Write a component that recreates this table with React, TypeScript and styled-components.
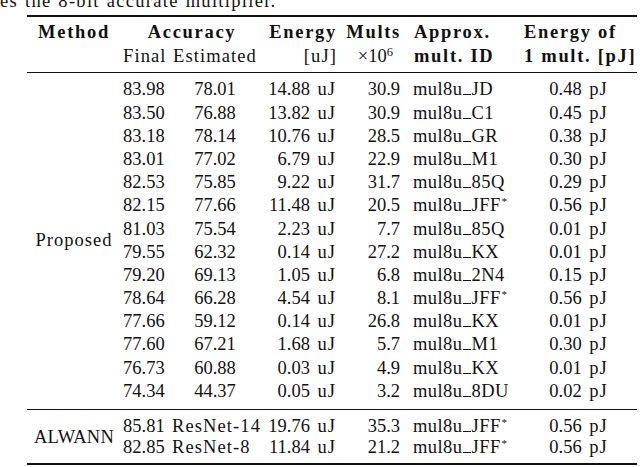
import React from 'react';
import styled, { createGlobalStyle } from 'styled-components';

const GlobalStyle = createGlobalStyle`
  html, body {
    margin: 0;
    padding: 0;
    background: #ffffff;
  }
  body {
    width: 640px;
    height: 467px;
    overflow: hidden;
    font-family: 'Liberation Serif', 'Times New Roman', serif;
    font-size: 18.5px;
    color: #111111;
  }
`;

const COLUMNS = '94px 48px 92px 76px 64px 119px 117px';

const Caption = styled.div`
  margin-top: -10px;
  height: 22px;
  line-height: 22px;
  letter-spacing: 1.3px;
  word-spacing: 1px;
  white-space: nowrap;
`;

const Table = styled.div`
  margin: 3px 0 0 27px;
  width: 610px;
  border-top: 2px solid #111;
  border-bottom: 2px solid #111;
`;

const Section = styled.div<{ $row: number; $gap?: number; $pt: number; $pb: number; $rule?: boolean }>`
  display: grid;
  grid-template-columns: ${COLUMNS};
  grid-auto-rows: ${p => p.$row}px;
  row-gap: ${p => p.$gap ?? 0}px;
  padding: ${p => p.$pt}px 0 ${p => p.$pb}px;
  border-bottom: ${p => (p.$rule ? '1px solid #111' : 'none')};
`;

type Align = 'left' | 'center' | 'right';

const Cell = styled.div<{ $align?: Align; $pl?: number; $pr?: number; $span?: number; $text?: boolean }>`
  text-align: ${p => p.$align ?? 'left'};
  padding-left: ${p => p.$pl ?? 0}px;
  padding-right: ${p => p.$pr ?? 0}px;
  grid-column: ${p => (p.$span ? `span ${p.$span}` : 'auto')};
  letter-spacing: ${p => (p.$text ? '1.1px' : '0')};
  white-space: nowrap;
  line-height: inherit;
`;

const HeadCell = styled(Cell)`
  font-weight: 700;
  letter-spacing: 1.7px;
`;

const IdCell = styled(Cell)`
  letter-spacing: 0.4px;
`;

const GroupLabel = styled.div<{ $rows: number; $spacing: number }>`
  grid-column: 1;
  grid-row: 1 / span ${p => p.$rows};
  align-self: center;
  text-align: center;
  letter-spacing: ${p => p.$spacing}px;
  white-space: nowrap;
`;

const Unit = styled.span`
  margin-left: 2px;
  letter-spacing: 1px;
`;

const Sup = styled.sup`
  font-size: 0.68em;
  line-height: 0;
  vertical-align: 0.5em;
  letter-spacing: 0;
`;

const Star = styled.sup`
  font-size: 0.6em;
  line-height: 0;
  vertical-align: 0.55em;
  margin-left: 1px;
`;

// LaTeX's \_ sits on the baseline rather than below it
const Underscore = styled.span`
  display: inline-block;
  width: 0.45em;
  height: 1px;
  margin: 0 0.5px;
  background: currentColor;
  vertical-align: baseline;
`;

const HeaderRows = styled(Section)`
  line-height: 22px;
`;

const DataRows = styled(Section)`
  line-height: ${p => p.$row}px;
`;

type Row = [string, string, string, string, string, string];

const proposed: Row[] = [
  ['83.98', '78.01', '14.88', '30.9', 'JD', '0.48'],
  ['83.50', '76.88', '13.82', '30.9', 'C1', '0.45'],
  ['83.18', '78.14', '10.76', '28.5', 'GR', '0.38'],
  ['83.01', '77.02', '6.79', '22.9', 'M1', '0.30'],
  ['82.53', '75.85', '9.22', '31.7', '85Q', '0.29'],
  ['82.15', '77.66', '11.48', '20.5', 'JFF*', '0.56'],
  ['81.03', '75.54', '2.23', '7.7', '85Q', '0.01'],
  ['79.55', '62.32', '0.14', '27.2', 'KX', '0.01'],
  ['79.20', '69.13', '1.05', '6.8', '2N4', '0.15'],
  ['78.64', '66.28', '4.54', '8.1', 'JFF*', '0.56'],
  ['77.66', '59.12', '0.14', '26.8', 'KX', '0.01'],
  ['77.60', '67.21', '1.68', '5.7', 'M1', '0.30'],
  ['76.73', '60.88', '0.03', '4.9', 'KX', '0.01'],
  ['74.34', '44.37', '0.05', '3.2', '8DU', '0.02'],
];

const alwann: Row[] = [
  ['85.81', 'ResNet-14', '19.76', '35.3', 'JFF*', '0.56'],
  ['82.85', 'ResNet-8', '11.84', '21.2', 'JFF*', '0.56'],
];

// multiplier IDs ending in * get the asterisk as a superscript
const MultId: React.FC<{ id: string }> = ({ id }) => {
  const starred = id.endsWith('*');
  return (
    <>
      mul8u
      <Underscore aria-label="_" />
      {starred ? id.slice(0, -1) : id}
      {starred && <Star>*</Star>}
    </>
  );
};

const DataCells: React.FC<{ row: Row; named?: boolean }> = ({ row, named }) => (
  <>
    <Cell $pl={2}>{row[0]}</Cell>
    {named ? (
      <Cell $pl={3} $text>{row[1]}</Cell>
    ) : (
      <Cell $align="center">{row[1]}</Cell>
    )}
    <Cell $align="right" $pr={1}>
      {row[2]}
      <Unit> uJ</Unit>
    </Cell>
    <Cell $align="right" $pr={1}>{row[3]}</Cell>
    <IdCell $pl={12}>
      <MultId id={row[4]} />
    </IdCell>
    <Cell $align="center">
      {row[5]}
      <Unit> pJ</Unit>
    </Cell>
  </>
);

export default function App() {
  return (
    <>
      <GlobalStyle />
      <Caption>es the 8-bit accurate multiplier.</Caption>
      <Table>
        <HeaderRows $row={22} $gap={2} $pt={4} $pb={5} $rule>
          <HeadCell $align="center">Method</HeadCell>
          <HeadCell $align="center" $span={2} $pl={2}>Accuracy</HeadCell>
          <HeadCell $align="right">Energy</HeadCell>
          <HeadCell $align="right">Mults</HeadCell>
          <HeadCell $pl={13}>Approx.</HeadCell>
          <HeadCell $pl={4}>Energy of</HeadCell>

          <Cell />
          <Cell $pl={2} $text>Final</Cell>
          <Cell $align="center" $text>Estimated</Cell>
          <Cell $align="right" $text>[uJ]</Cell>
          <Cell $align="right" $pr={8}>
            ×10<Sup>6</Sup>
          </Cell>
          <HeadCell $pl={13}>mult. ID</HeadCell>
          <HeadCell $pl={4}>1 mult. [pJ]</HeadCell>
        </HeaderRows>

        <DataRows $row={23.2} $pt={5.4} $pb={5.8} $rule>
          <GroupLabel $rows={proposed.length} $spacing={1}>Proposed</GroupLabel>
          {proposed.map(row => (
            <DataCells key={row.join('-')} row={row} />
          ))}
        </DataRows>

        <DataRows $row={21.5} $pt={6} $pb={4.5}>
          <GroupLabel $rows={alwann.length} $spacing={0.2}>ALWANN</GroupLabel>
          {alwann.map(row => (
            <DataCells key={row.join('-')} row={row} named />
          ))}
        </DataRows>
      </Table>
    </>
  );
}
